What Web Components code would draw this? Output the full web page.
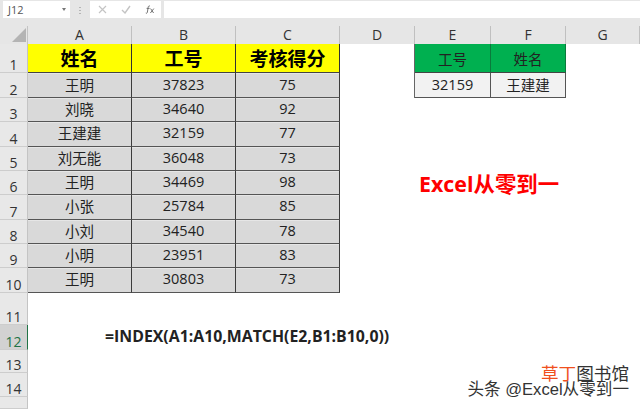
<!DOCTYPE html>
<html>
<head>
<meta charset="utf-8">
<style>
  html, body { margin: 0; padding: 0; background: #fff; }
  body { width: 640px; height: 409px; overflow: hidden; position: relative; font-family: "Open Sans", "Noto Sans CJK SC", sans-serif; }
</style>
</head>
<body>
<xl-formula-bar name="J12"></xl-formula-bar>
<xl-sheet></xl-sheet>
<xl-watermark></xl-watermark>

<script>
class FormulaBar extends HTMLElement {
  constructor() {
    super();
    const shadow = this.attachShadow({mode: 'open'});
    shadow.innerHTML = `
      <style>
        :host { display: flex; height: 26px; box-sizing: border-box; padding: 1px 0 7px 3px; background: #e6e6e6; color: #555; font-family: "Open Sans", sans-serif; }
        .box { background: #fff; height: 17px; display: flex; align-items: center; }
        .name { width: 67px; font-size: 11px; padding-left: 5px; box-sizing: border-box; justify-content: space-between; }
        .caret { width: 0; height: 0; margin-right: 4px; border: 2.5px solid transparent; border-top: 3px solid #777; border-bottom: 0; }
        .dots { width: 20px; display: flex; flex-direction: column; gap: 2px; align-items: center; justify-content: center; }
        .dots i { width: 2px; height: 1px; background: #b5b5b5; }
        .fx { width: 71px; gap: 14px; padding-left: 8px; box-sizing: border-box; }
        .input { flex: 1; margin-left: 3px; }
        svg { display: block; }
      </style>
      <div class="box name"><span>${this.getAttribute('name')}</span><i class="caret"></i></div>
      <div class="dots"><i></i><i></i><i></i></div>
      <div class="box fx">
        <svg width="9" height="9" viewBox="0 0 9 9"><path d="M1 1l7 7M8 1L1 8" stroke="#c4c4c4" stroke-width="1.2" fill="none"/></svg>
        <svg width="10" height="9" viewBox="0 0 10 9"><path d="M1 5l3 3 5-7" stroke="#c4c4c4" stroke-width="1.4" fill="none"/></svg>
        <svg width="10" height="9" viewBox="0 0 10 9"><path d="M5 1.2C4 .6 3.4 1 3.2 2.2L2.4 7C2.2 8.2 1.6 8.6.8 8M1.6 3.4h3M5.6 3.6l3 4.4M8.8 3.6L5.4 8" stroke="#666" stroke-width=".9" fill="none"/></svg>
      </div>
      <div class="box input"></div>
    `;
  }
}
customElements.define('xl-formula-bar', FormulaBar);

const COLS = ['A','B','C','D','E','F','G'];
const NAMES = ['王明','刘晓','王建建','刘无能','王明','小张','小刘','小明','王明'];
const IDS = [37823,34640,32159,36048,34469,25784,34540,23951,30803];
const SCORES = [75,92,77,73,98,85,78,83,73];

class Sheet extends HTMLElement {
  constructor() {
    super();
    const shadow = this.attachShadow({mode: 'open'});
    let html = `<div class="corner"><i></i></div>`;
    COLS.forEach(c => html += `<div class="ch">${c}</div>`);
    for (let r = 1; r <= 15; r++) {
      html += `<div class="rh${r === 12 ? ' on' : ''}" style="grid-row:${r + 1}">${r < 15 ? r : ''}</div>`;
    }
    const cell = (cls, r, c, txt) => `<div class="cell ${cls}" style="grid-row:${r + 1};grid-column:${c + 1}">${txt}</div>`;
    ['姓名','工号','考核得分'].forEach((t, i) => html += cell('head', 1, i + 1, t));
    for (let i = 0; i < 9; i++) {
      html += cell('data', i + 2, 1, NAMES[i]);
      html += cell('data', i + 2, 2, IDS[i]);
      html += cell('data', i + 2, 3, SCORES[i]);
    }
    html += cell('green', 1, 5, '工号') + cell('green', 1, 6, '姓名');
    html += cell('light', 2, 5, '32159') + cell('light', 2, 6, '王建建');
    html += `<div class="title">Excel从零到一</div>`;
    html += `<div class="formula">=INDEX(A1:A10,MATCH(E2,B1:B10,0))</div>`;
    shadow.innerHTML = `
      <style>
        :host { display: grid; width: 640px; height: 383px; background: #fff; overflow: hidden;
          grid-template-columns: 28px 104px 104px 104px 75px 76px 75px 74px;
          grid-template-rows: 18px 29px 25px repeat(8, 24.33px) 32.5px 24.5px 23.5px 24px 12px;
          font-family: "Open Sans", "Noto Sans CJK SC", sans-serif; color: #222; }
        .corner { background: #e6e6e6; border-right: 1px solid #c4c4c4; position: relative; box-sizing: border-box; }
        .corner i { position: absolute; right: 1px; bottom: 2px; width: 0; height: 0; border-style: solid; border-width: 0 0 14px 14px; border-color: transparent transparent #b4b4b4 transparent; }
        .ch { background: #e6e6e6; border-right: 1px solid #c0c0c0; box-sizing: border-box; font-size: 14px; line-height: 18px; text-align: center; color: #333; }
        .rh { grid-column: 1; background: #e8e8e8; border-right: 1px solid #c4c4c4; border-bottom: 1px solid #cdcdcd; box-sizing: border-box; font-size: 14px; color: #333; display: flex; align-items: flex-end; justify-content: center; line-height: 15px; padding-bottom: 0; }
        .rh.on { background: #d2d2d2; color: #217346; border-right: 1px solid #217346; }
        .cell { display: flex; align-items: center; justify-content: center; box-sizing: border-box; }
        .head { background: #ff0; font-weight: 700; font-size: 19px; color: #000; border-right: 1px solid #333; border-bottom: 1px solid #444; }
        .data { background: #d9d9d9; font-size: 14.5px; padding-bottom: 2px; border-right: 1px solid #3c3c3c; border-bottom: 1px solid #555; box-shadow: inset 0 1px 0 #e6e6e6; }
        .green { background: #00b050; font-size: 14.5px; border-right: 1px solid #0a7a3c; border-bottom: 1px solid #444; }
        .light { background: #f2f2f2; font-size: 14.5px; padding-bottom: 2px; border-right: 1px solid #555; border-bottom: 1px solid #555; }
        .green[style*="column:6"], .light[style*="column:6"] { box-shadow: -1px 0 0 #666; }
        .title { grid-row: 7; grid-column: 6 / 9; color: #f00; font-weight: 700; font-size: 21.4px; white-space: nowrap; align-self: center; margin: -2px 0 0 4px; }
        .formula { grid-row: 13; grid-column: 2 / 6; font-weight: 700; font-size: 15.85px; color: #222; white-space: nowrap; align-self: center; margin: -2px 0 0 77px; }
      </style>
      ${html}
    `;
  }
}
customElements.define('xl-sheet', Sheet);

class Watermark extends HTMLElement {
  constructor() {
    super();
    const shadow = this.attachShadow({mode: 'open'});
    shadow.innerHTML = `
      <style>
        :host { position: absolute; right: 11px; bottom: 11px; display: block; text-align: right; font-family: "Liberation Sans", "Noto Sans CJK SC", sans-serif; color: #333; font-size: 16.6px; line-height: 16px; }
        .top { font-size: 17.6px; line-height: 15px; }
        .top b { font-weight: 400; color: #f0501e; }
      </style>
      <div class="top"><b>草丁</b>图书馆</div>
      <div>头条 @Excel从零到一</div>
    `;
  }
}
customElements.define('xl-watermark', Watermark);
</script>
</body>
</html>
